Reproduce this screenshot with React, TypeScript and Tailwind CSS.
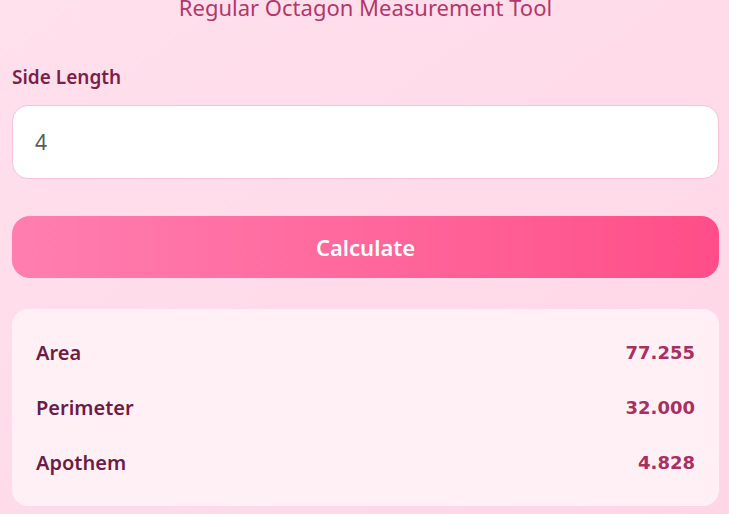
import React, { useState } from 'react';

function octagon(s: number) {
  const area = 2 * (1 + Math.SQRT2) * s * s;
  const perimeter = 8 * s;
  const apothem = (s / 2) * (1 + Math.SQRT2);
  return { area, perimeter, apothem };
}

export default function App() {
  const [side, setSide] = useState('4');
  const [result, setResult] = useState(octagon(4));

  const rows = [
    { label: 'Area', value: result.area },
    { label: 'Perimeter', value: result.perimeter },
    { label: 'Apothem', value: result.apothem },
  ];

  return (
    <div
      className="h-screen overflow-hidden bg-gradient-to-br from-[#ffe0ec] via-[#ffdbe9] to-[#ffd6e6] pl-3 pr-[10px]"
      style={{ fontFamily: '"Noto Sans", "Open Sans", sans-serif' }}
    >
      <h1 className="-mt-[7px] text-center text-[22px] font-normal leading-[28px] text-[#b0386b]">
        Regular Octagon Measurement Tool
      </h1>

      <label className="mt-[42px] block text-[19px] font-semibold leading-[28px] text-[#7a1f4a]">
        Side Length
      </label>

      <input
        type="number"
        value={side}
        onChange={(e) => setSide(e.target.value)}
        className="mt-[14px] block h-[74px] w-full rounded-2xl border border-[#f5c2d6] bg-white px-[22px] text-[21px] text-[#5a5a5a] outline-none"
      />

      <button
        onClick={() => setResult(octagon(parseFloat(side) || 0))}
        className="mt-[37px] block h-[62px] w-full rounded-[18px] bg-gradient-to-r from-[#ff7eb0] to-[#ff4d88] text-[22px] font-semibold text-white"
      >
        Calculate
      </button>

      <div className="mt-[31px] rounded-2xl bg-[#fff0f6] px-6 py-4">
        {rows.map((r) => (
          <div key={r.label} className="flex h-[55px] items-center justify-between">
            <span className="text-[20px] font-semibold text-[#6b1d45]">{r.label}</span>
            <span
              className="text-[18px] font-bold text-[#a8305f]"
              style={{ fontFamily: '"DejaVu Sans", Verdana, sans-serif' }}
            >
              {r.value.toFixed(3)}
            </span>
          </div>
        ))}
      </div>
    </div>
  );
}
